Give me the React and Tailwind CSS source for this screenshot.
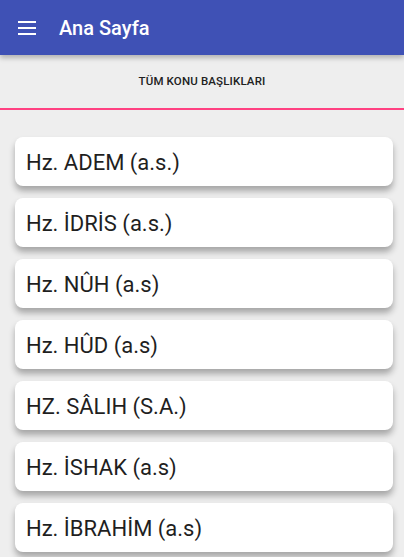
const ITEMS = [
  'Hz. ADEM (a.s.)',
  'Hz. İDRİS (a.s.)',
  'Hz. NÛH (a.s)',
  'Hz. HÛD (a.s)',
  'HZ. SÂLIH (S.A.)',
  'Hz. İSHAK (a.s)',
  'Hz. İBRAHİM (a.s)',
];

function MenuIcon() {
  return (
    <svg width="18" height="14" viewBox="0 0 18 14" className="block">
      <rect x="0" y="0" width="18" height="2" fill="white" />
      <rect x="0" y="6" width="18" height="2" fill="white" />
      <rect x="0" y="12" width="18" height="2" fill="white" />
    </svg>
  );
}

export default function App() {
  return (
    <div className="w-[404px] h-[557px] overflow-hidden bg-[#eeeeee] flex flex-col font-['Roboto',sans-serif]">
      <header className="relative z-10 h-[55px] shrink-0 bg-[#3f51b5] flex items-center shadow-[0_3px_5px_rgba(0,0,0,0.25)]">
        <div className="pl-[18px] pr-[23px] pt-[1px]">
          <MenuIcon />
        </div>
        <h1 className="text-white text-[20px] font-medium leading-none">Ana Sayfa</h1>
      </header>

      <div className="h-[53px] shrink-0 flex items-center justify-center">
        <span className="text-[11.5px] font-medium text-[#212121] tracking-[0.15px]">TÜM KONU BAŞLIKLARI</span>
      </div>
      <div className="h-[2px] shrink-0 bg-[#ff4081]" />

      <ul className="flex flex-col gap-[12px] pt-[27px] pl-[15px] pr-[11px]">
        {ITEMS.map((name) => (
          <li
            key={name}
            className="h-[49px] shrink-0 bg-white rounded-[8px] flex items-center pl-[11px] pt-[3px] shadow-[0_5px_6px_rgba(0,0,0,0.3)]"
          >
            <span className="text-[22px] font-normal text-[#1f1f1f] leading-none">{name}</span>
          </li>
        ))}
      </ul>
    </div>
  );
}
